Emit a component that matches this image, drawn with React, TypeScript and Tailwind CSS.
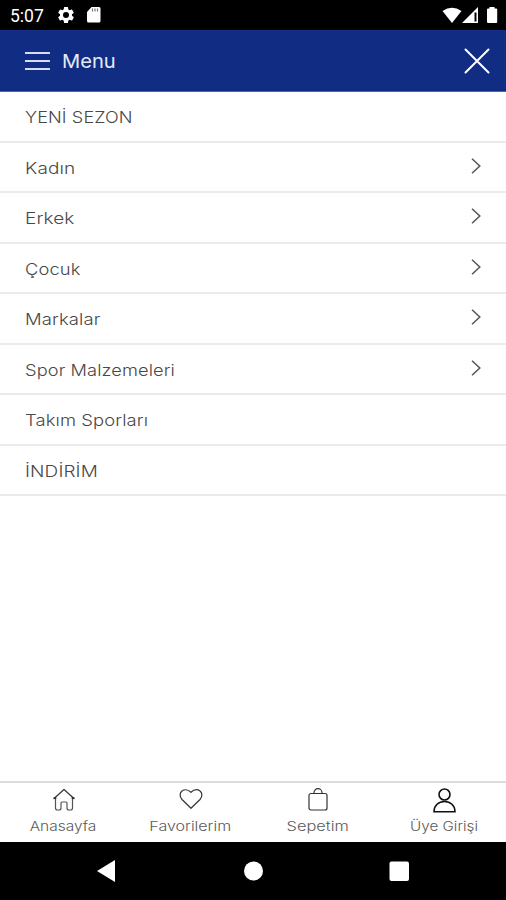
import React from 'react';

interface MenuItem {
  label: string;
  stretch: string;
  hasChildren?: boolean;
}

const menuItems: MenuItem[] = [
  { label: 'YENİ SEZON', stretch: 'scale-x-[1.095]' },
  { label: 'Kadın', stretch: 'scale-x-[1.15]', hasChildren: true },
  { label: 'Erkek', stretch: 'scale-x-[1.15]', hasChildren: true },
  { label: 'Çocuk', stretch: 'scale-x-[1.11]', hasChildren: true },
  { label: 'Markalar', stretch: 'scale-x-[1.12]', hasChildren: true },
  { label: 'Spor Malzemeleri', stretch: 'scale-x-[1.105]', hasChildren: true },
  { label: 'Takım Sporları', stretch: 'scale-x-[1.115]' },
  { label: 'İNDİRİM', stretch: 'scale-x-[1.15]' },
];

const StatusBar: React.FC = () => (
  <div className="h-[30px] shrink-0 bg-black text-white flex items-center justify-between pl-[10px] pr-[8px]">
    <div className="flex items-center">
      <span className="w-[46px] pt-[3px] font-['Roboto',sans-serif] text-[17.5px] leading-none">5:07</span>
      <svg width="20" height="20" viewBox="0 0 24 24" fill="currentColor">
        <path d="M19.14 12.94c.04-.3.06-.61.06-.94 0-.32-.02-.64-.07-.94l2.03-1.58a.49.49 0 0 0 .12-.61l-1.92-3.32a.49.49 0 0 0-.59-.22l-2.39.96c-.5-.38-1.03-.7-1.62-.94l-.36-2.54a.48.48 0 0 0-.48-.41h-3.84a.48.48 0 0 0-.47.41l-.36 2.54c-.59.24-1.13.57-1.62.94l-2.39-.96a.49.49 0 0 0-.59.22L2.74 8.87a.48.48 0 0 0 .12.61l2.03 1.58c-.05.3-.09.63-.09.94s.02.64.07.94l-2.03 1.58a.49.49 0 0 0-.12.61l1.92 3.32c.12.22.37.29.59.22l2.39-.96c.5.38 1.03.7 1.62.94l.36 2.54c.05.24.24.41.48.41h3.84c.24 0 .44-.17.47-.41l.36-2.54c.59-.24 1.13-.56 1.62-.94l2.39.96c.22.08.47 0 .59-.22l1.92-3.32a.48.48 0 0 0-.12-.61zM12 15.6A3.6 3.6 0 1 1 12 8.4a3.6 3.6 0 0 1 0 7.2z" />
      </svg>
      <svg className="ml-[11px]" width="14" height="16" viewBox="0 0 14 16">
        <path d="M4.5 0H12a1.500 1.500 0 0 1 1.500 1.500v12.500a1.500 1.500 0 0 1-1.500 1.500H1.500A1.500 1.500 0 0 1 0 14V5z" fill="#fff" />
        <path d="M5.5 1.500v3M8 1.500v3M10.500 1.500v3" stroke="#777" strokeWidth="1.200" />
      </svg>
    </div>
    <svg width="56" height="17" viewBox="0 0 56 17" fill="#fff">
      <path d="M0.500 4Q10 -2.500 19.500 4L10 16z" />
      <path fillRule="evenodd" d="M36 0v16H20zM32.500 5.500v9h2v-9z" />
      <path d="M47.500 0h5v1.500h1.700q1 0 1 1V15q0 1-1 1h-8.200q-1 0-1-1V2.500q0-1 1-1h1.500z" />
    </svg>
  </div>
);

const Header: React.FC = () => (
  <header className="h-[62px] shrink-0 bg-[#102d83] border-b border-[#5360a4] text-white flex items-center pl-[25px] pr-[16px]">
    <svg width="25" height="20" viewBox="0 0 25 20" stroke="#d5dcf0" strokeWidth="2">
      <path d="M0 2h25M0 10h25M0 18h25" />
    </svg>
    <span className="ml-[12px] mt-[3px] inline-block origin-left scale-x-[1.06] text-[19px] text-[#e4e9f6]">Menu</span>
    <svg className="ml-auto" width="26" height="26" viewBox="0 0 26 26" stroke="currentColor" strokeWidth="2" strokeLinecap="round">
      <path d="M1.500 1.500l23 23M24.500 1.500l-23 23" />
    </svg>
  </header>
);

const HomeIcon = () => (
  <svg width="24" height="26" viewBox="0 0 24 26" fill="none" stroke="#333" strokeWidth="1.200" strokeLinejoin="round" strokeLinecap="round">
    <path d="M2 11.500L12 2.500l10 9" />
    <path d="M3.500 10.500V21q0 2 2 2H7q2 0 2-2v-5q0-1 1-1h4q1 0 1 1v5q0 2 2 2h1.500q2 0 2-2V10.500" stroke="#555" />
    <path d="M2.500 11h1M20.500 11h1" strokeWidth="2" />
  </svg>
);

const HeartIcon = () => (
  <svg width="24" height="26" viewBox="0 0 24 26" fill="none" stroke="#333" strokeWidth="1.200" strokeLinejoin="round">
    <path d="M12 21.300L3 12.500C.3 9.500.7 5.700 3 4 5.800 2 9.500 3 12 5.300 14.500 3 18.200 2 21 4 23.300 5.700 23.700 9.500 21 12.500z" />
  </svg>
);

const BagIcon = () => (
  <svg width="24" height="26" viewBox="0 0 24 26" fill="none" stroke="#333" strokeWidth="1.200">
    <rect x="3" y="6.500" width="18" height="16.500" rx="2" />
    <path d="M8 6.500V5.700a4 4 0 0 1 8 0v.8" />
  </svg>
);

const UserIcon = () => (
  <svg width="24" height="26" viewBox="0 0 24 26" fill="none" stroke="#111" strokeWidth="1.600">
    <circle cx="11.500" cy="7.500" r="5.500" />
    <path d="M1 24.800C1 18.500 5.500 14.500 11.500 14.500s10.500 4 10.500 10.300z" />
  </svg>
);

const tabs = [
  { label: 'Anasayfa', icon: HomeIcon, stretch: 'scale-x-[1.19]' },
  { label: 'Favorilerim', icon: HeartIcon, stretch: 'scale-x-[1.23]' },
  { label: 'Sepetim', icon: BagIcon, stretch: 'scale-x-[1.26]' },
  { label: 'Üye Girişi', icon: UserIcon, stretch: 'scale-x-[1.17]' },
];

const App: React.FC = () => {
  return (
    <div className="w-full h-screen flex flex-col overflow-hidden bg-white font-['Inter',sans-serif]">
      <StatusBar />
      <Header />

      <ul className="flex-1">
        {menuItems.map(item => (
          <li
            key={item.label}
            className="h-[50.5px] border-b-2 border-[#ebebeb] pl-[25px] pr-[25px] flex items-center justify-between"
          >
            <span className={`mt-[3px] inline-block origin-left text-[16.5px] tracking-[0.1px] font-light text-[#484848] ${item.stretch}`}>
              {item.label}
            </span>
            {item.hasChildren && (
              <svg className="mb-[2px]" width="10" height="16" viewBox="0 0 10 16" fill="none" stroke="#555" strokeWidth="1.500">
                <path d="M1 .8L8.800 8 1 15.200" />
              </svg>
            )}
          </li>
        ))}
      </ul>

      <nav className="h-[61px] shrink-0 border-t-2 border-[#dcdcdc] grid grid-cols-[repeat(4,127px)]">
        {tabs.map(({ label, icon: Icon, stretch }) => (
          <button key={label} className="flex flex-col items-center pt-[4px]">
            <Icon />
            <span className={`mt-[4px] inline-block text-[13px] leading-[18px] font-light text-[#5a5a5a] whitespace-nowrap ${stretch}`}>
              {label}
            </span>
          </button>
        ))}
      </nav>

      <div className="h-[58px] shrink-0 bg-black flex items-center justify-center">
        <svg width="506" height="24" viewBox="0 0 506 24" fill="#fff">
          <path d="M97 12l18-11v22z" />
          <circle cx="253.500" cy="12" r="9.500" />
          <rect x="389.500" y="2.500" width="19.500" height="19.500" rx="2" />
        </svg>
      </div>
    </div>
  );
};

export default App;
